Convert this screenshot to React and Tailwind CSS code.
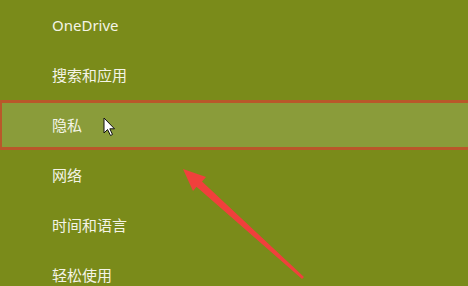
import React from 'react';

const items = ['OneDrive', '搜索和应用', '隐私', '网络', '时间和语言', '轻松使用'];

export default function App() {
  return (
    <div
      className="relative w-[468px] h-[286px] overflow-hidden bg-[#7a8b1a] text-[#f4f4e6] text-[15px]"
      style={{ fontFamily: '"Noto Sans", "Noto Sans CJK SC", sans-serif' }}
    >
      <div className="flex flex-col">
        {items.map((name, i) =>
          i === 2 ? (
            <div
              key={name}
              className="h-[50px] flex items-center pl-[50px] bg-[#8a9c3a] border-y-[3px] border-l-[2px] border-[#b9582a]"
            >
              {name}
            </div>
          ) : (
            <div key={name} className="h-[50px] flex items-center pl-[52px]">
              {name}
            </div>
          )
        )}
      </div>

      {/* mouse pointer */}
      <svg className="absolute left-[103px] top-[117px]" width="14" height="20" viewBox="0 0 14 20">
        <path d="M1 1 L1 16 L4.5 12.5 L7.5 18.5 L9.5 17.5 L6.8 11.8 L11.5 11.8 Z" fill="#fff" stroke="#111" strokeWidth="1" strokeLinejoin="round" />
      </svg>

      {/* red annotation arrow */}
      <svg className="absolute left-0 top-0" width="468" height="286" viewBox="0 0 468 286">
        <polygon
          points="183,169 206,177 202,181.5 304,277 302,279 196.5,186.8 193,191"
          fill="#f0403c"
        />
      </svg>
    </div>
  );
}
